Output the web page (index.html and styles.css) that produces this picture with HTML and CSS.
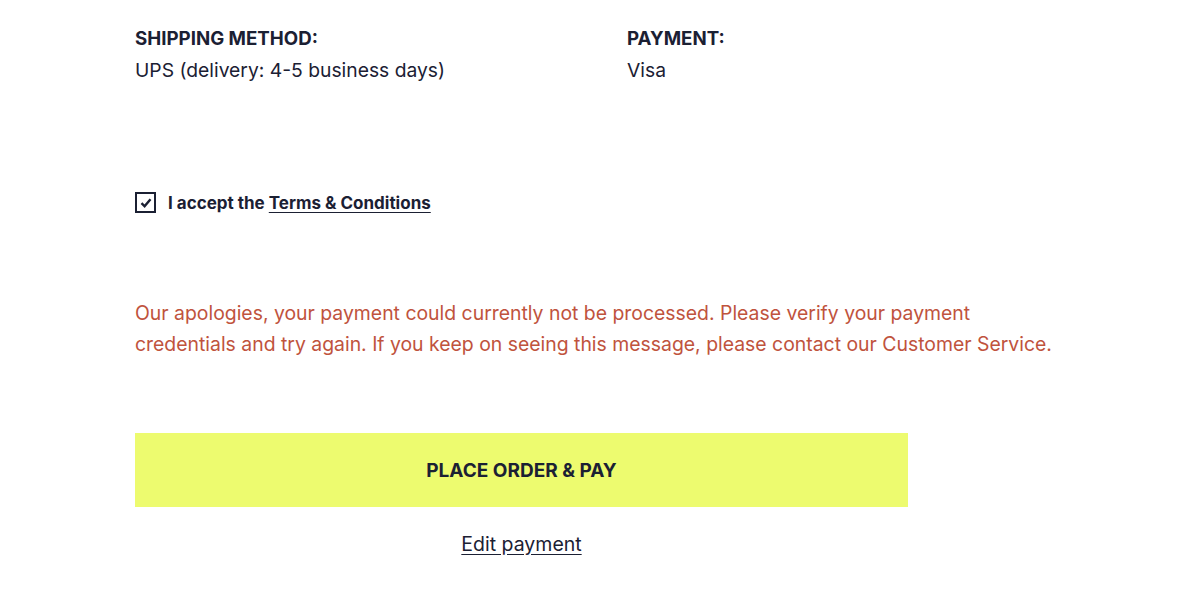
FILE: index.html
```html
<!DOCTYPE html>
<html lang="en">
<head>
    <meta charset="UTF-8">
    <meta name="viewport" content="width=device-width, initial-scale=1.0">
    <title>Checkout - Review</title>
    <link rel="stylesheet" href="styles.css">
</head>
<body>
    <div class="container">
        <div class="summary">
            <div class="summary-col">
                <h3>SHIPPING METHOD:</h3>
                <p>UPS (delivery: 4-5 business days)</p>
            </div>
            <div class="summary-col">
                <h3>PAYMENT:</h3>
                <p>Visa</p>
            </div>
        </div>

        <label class="terms">
            <span class="checkbox">
                <svg width="14" height="14" viewBox="0 0 14 14"><path d="M2.5 7.2 L5.6 10.3 L11.5 3.2" fill="none" stroke="#1b2033" stroke-width="2.4"/></svg>
            </span>
            <span>I accept the <a href="#">Terms &amp; Conditions</a></span>
        </label>

        <p class="error-msg">Our apologies, your payment could currently not be processed. Please verify your payment credentials and try again. If you keep on seeing this message, please contact our Customer Service.</p>

        <div class="actions">
            <button class="pay-btn">PLACE ORDER &amp; PAY</button>
            <a href="#" class="edit-link">Edit payment</a>
        </div>
    </div>
</body>
</html>
```

FILE: styles.css
```css
body {
    font-family: Inter, "Noto Sans", sans-serif;
    margin: 0;
    padding: 0;
    background-color: #fff;
    color: #1b2033;
}
.container {
    padding: 28px 135px 0 135px;
}
.summary {
    display: grid;
    grid-template-columns: 492px 1fr;
}
.summary h3 {
    font-size: 18.7px;
    font-weight: 700;
    margin: 0 0 8px 0;
    line-height: 22px;
}
.summary p {
    font-size: 19.3px;
    margin: 0;
    line-height: 24px;
}
.terms {
    display: flex;
    align-items: center;
    gap: 12px;
    margin-top: 110px;
    font-size: 17px;
    font-weight: 700;
}
.checkbox {
    width: 17px;
    height: 17px;
    border: 2px solid #1b2033;
    display: flex;
    align-items: center;
    justify-content: center;
}
.terms a {
    color: #1b2033;
    text-decoration: underline;
    text-underline-offset: 3px;
}
.error-msg {
    color: #c0533d;
    font-size: 19.4px;
    line-height: 31px;
    margin: 85px 0 0 0;
    max-width: 920px;
}
.actions {
    width: 773px;
    margin-top: 73px;
    display: flex;
    flex-direction: column;
    align-items: center;
}
.pay-btn {
    width: 100%;
    height: 74px;
    background: #edfb6f;
    border: none;
    font-family: inherit;
    font-size: 19px;
    font-weight: 700;
    color: #1b2033;
}
.edit-link {
    margin-top: 25px;
    font-size: 19.5px;
    color: #1b2033;
    text-underline-offset: 3px;
}
```
